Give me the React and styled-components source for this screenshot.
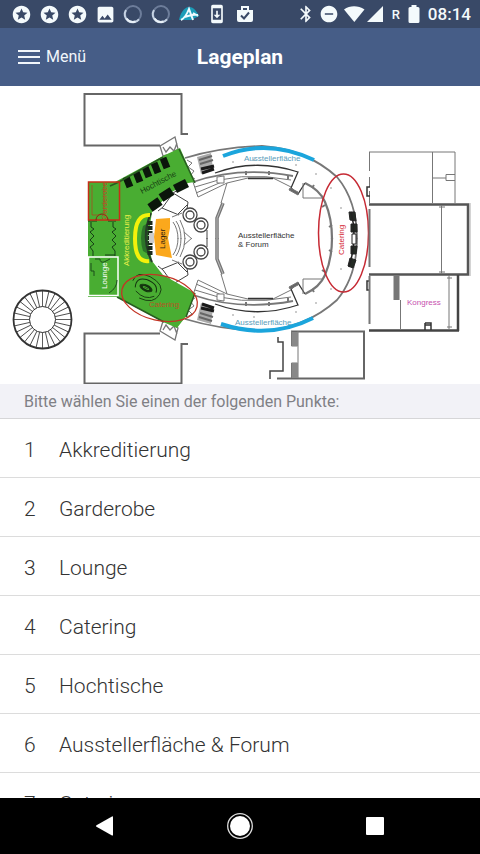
import React, { useState } from "react";
import styled, { createGlobalStyle } from "styled-components";
import {
  MdBluetooth,
  MdDoNotDisturbOn,
  MdImage,
  MdStars,
  MdSystemUpdate,
} from "react-icons/md";

const GlobalStyle = createGlobalStyle`
  * {
    box-sizing: border-box;
  }
  body {
    margin: 0;
    background: #fff;
    font-family: Roboto, "Liberation Sans", sans-serif;
  }
`;

const Screen = styled("div")`
  display: flex;
  flex-direction: column;
  height: 100vh;
  overflow: hidden;
`;

const StatusBar = styled("div")`
  display: flex;
  justify-content: space-between;
  align-items: center;
  flex-shrink: 0;
  height: 28px;
  padding: 0 9px 0 12px;
  background: #394967;
  color: #f4fafc;
`;

const StatusGroup = styled("div")`
  display: flex;
  align-items: center;
  gap: ${(props) => props.$gap}px;
`;

const StatusIcon = styled("span")`
  display: flex;
  justify-content: center;
  width: ${(props) => props.$width || 18}px;

  svg {
    flex-shrink: 0;
  }
`;

const Roaming = styled("span")`
  width: 8px;
  font-size: 13px;
  font-weight: 500;
`;

const Clock = styled("time")`
  font-size: 17px;
  line-height: 20px;
  font-weight: 500;
`;

const Header = styled("header")`
  display: grid;
  grid-template-columns: 1fr auto 1fr;
  align-items: center;
  flex-shrink: 0;
  height: 58px;
  padding: 0 18px;
  background: #465d87;
  color: #fff;
`;

const MenuButton = styled("button")`
  display: flex;
  align-items: center;
  justify-self: start;
  gap: 6px;
  padding: 0;
  border: none;
  background: none;
  color: #f1f6fb;
  font-family: inherit;
  font-size: 16px;
  line-height: 24px;
  cursor: pointer;
`;

const Title = styled("h1")`
  margin: 0;
  font-size: 21px;
  line-height: 24px;
  font-weight: 700;
`;

const Content = styled("main")`
  flex: 1;
  min-height: 0;
  overflow-y: auto;
  scrollbar-width: none;
`;

const Plan = styled("svg")`
  display: block;
  width: 100%;
  height: auto;
  background: #fff;
  font-family: "Liberation Sans", Arial, sans-serif;
  font-size: 8px;
`;

const Hint = styled("p")`
  margin: 0;
  padding: 6px 24px 4px;
  border-bottom: 1px solid #d6d6d8;
  background: #f2f2f7;
  color: #808085;
  font-size: 16px;
  line-height: 24px;
`;

const List = styled("ul")`
  margin: 0;
  padding: 0;
  list-style: none;
`;

const Row = styled("li")`
  border-bottom: 1px solid #dcdcdc;
`;

const RowLink = styled("a")`
  display: flex;
  align-items: center;
  height: 58px;
  padding: 4px 24px 0;
  color: #333;
  font-size: 21px;
  line-height: 28px;
  font-weight: 300;
  text-decoration: none;
`;

const Number = styled("span")`
  width: 35px;
`;

const NavBar = styled("nav")`
  display: flex;
  justify-content: space-between;
  align-items: center;
  flex-shrink: 0;
  height: 56px;
  padding: 0 95px;
  background: #000;
`;

const NavButton = styled("button")`
  display: flex;
  padding: 0;
  border: none;
  background: none;
  cursor: pointer;
`;

const places = [
  "Akkreditierung",
  "Garderobe",
  "Lounge",
  "Catering",
  "Hochtische",
  "Ausstellerfläche & Forum",
  "Catering",
];

const Spinner = () => (
  <svg width="20" height="20" viewBox="0 0 20 20" fill="none" strokeWidth="2">
    <circle cx="10" cy="10" r="8" stroke="#6d7d9a" />
    <path d="M3 6a8 8 0 0 0 13 9.300" stroke="#c6d3e3" />
    <path d="M3.500 14.500a8 8 0 0 0 9 3" stroke="#e9f1f8" />
  </svg>
);

const AppLogo = () => (
  <svg width="22" height="18" viewBox="0 0 22 18" fill="none">
    <path d="M1 15C2 9 6 2 11 2c5 0 8 5 10 9l-8 4z" fill="#1b9cb8" />
    <path
      d="M3 15c4-2 6-6 8-11l4 11M6 12c5-1 8-3 14-2M15 8l5 3"
      stroke="#effbff"
      strokeWidth="2"
    />
  </svg>
);

const BagIcon = () => (
  <svg width="18" height="18" viewBox="0 0 18 18" fill="none">
    <path d="M6 5V2h6v3" stroke="#f4fafc" strokeWidth="2" />
    <path d="M1 5h16v10a2 2 0 0 1-2 2H3a2 2 0 0 1-2-2z" fill="#f4fafc" />
    <path d="M5 10.500l3 3 5-6" stroke="#394967" strokeWidth="2" />
  </svg>
);

const NetworkIcons = () => (
  <svg width="42" height="18" viewBox="0 0 42 18" fill="currentColor">
    <path d="M0 4.500C6 .3 14 .3 20.500 4.500L10.300 17z" />
    <path d="M39 1v16H23z" />
  </svg>
);

const BatteryIcon = () => (
  <svg width="12" height="18" viewBox="0 0 12 18" fill="currentColor">
    <path d="M3.500 0h5v2H10q1.500 0 1.500 1.500v13Q11.500 18 10 18H2Q.5 18 .5 16.500v-13Q.5 2 2 2h1.500z" />
  </svg>
);

// upper half of the round hall, drawn again upside down for the lower half
const HallHalf = () => (
  <g fill="none" stroke="#777" strokeWidth="1">
    <path d="M185 158Q222 147 262 146Q306 149 337 177Q357 201 357 239" strokeWidth="1.800" />
    <path d="M215 173Q256 158 298 172L291 188L298 194L305 183" stroke="#333" strokeWidth="1.300" />
    <path d="M303 183V198H322" />
    <path d="M290 188l8 4v3l-9-5z" fill="#666" />
    <path d="M193 182Q240 166 293 176" strokeWidth="1.800" />
    <path d="M195 187Q240 170 291 180" />
    <path d="M193 182l5 15L227 183L248 178H273L291 187M196 193L224 181" />
    <path d="M248 178.500H273" stroke="#333" strokeWidth="1.500" />
    <path d="M217 177v6h7v-7z" fill="#fff" />
    <path d="M246 171v4M269 171v4M288 175v4" strokeWidth="2" />
    <path d="M227 183L221 203" />
    <path d="M223 203L217 218V239" strokeWidth="3.500" />
    <path d="M223 203L217 218V239" stroke="#bbb" strokeWidth="1" />
    <path d="M305 183Q320 190 325 202Q332 218 332 239" strokeWidth="2.200" />
    <path d="M312 188l2-3M325 205l-3 2M332 225l-3 2" strokeWidth="2" />
    <path d="M197 157l14-4 2 16-12 5z" fill="#aaa" stroke="none" />
    <path d="M199 160l13-4M200 164l13-4" stroke="#666" strokeWidth="2" />
    <path d="M201 169l13-3M202 173l12-4" stroke="#1a1a1a" strokeWidth="3" />
    <g stroke="#444" strokeWidth="1.300">
      <circle cx="190" cy="215" r="7" />
      <circle cx="190" cy="215" r="4" />
      <circle cx="201" cy="225" r="7" />
      <circle cx="201" cy="225" r="4" />
    </g>
    <path d="M207 230v9M162 208l17 7M173 193l15 9-1 7M178 214l9-9M158 211l5-4 10-14 5-3" stroke="#444" />
    <path d="M172 217l10-4M173 222q5 7 5 17M176 221q5 7 5 18M180 220q5 9 5 19M184 232l8 7" />
    <path d="M187 160l5 3-4 4 6 4-4 5 5 3" />
    <path d="M160 146l15-9 3 12-7 5-8 2zM163 147l3 5 4-5 4 4 3-8" strokeWidth="1.300" />
    <g fill="#888" stroke="none">
      <circle cx="233" cy="162" r=".8" />
      <circle cx="254" cy="160" r=".8" />
      <circle cx="296" cy="165" r=".8" />
      <circle cx="316" cy="174" r=".8" />
      <circle cx="331" cy="188" r=".8" />
      <circle cx="341" cy="208" r=".8" />
    </g>
  </g>
);

const Wheel = () => (
  <g fill="none" stroke="#333">
    <circle cx="42.500" cy="319.500" r="29" strokeWidth="1.800" />
    <circle cx="42.500" cy="319.500" r="13" strokeWidth="1" />
    {Array.from({ length: 28 }, (_, i) => (
      <path
        key={i}
        d="M42.500 306.500V291"
        strokeWidth=".8"
        transform={`rotate(${(i * 360) / 28} 42.500 319.500)`}
      />
    ))}
  </g>
);

const FloorPlan = () => (
  <Plan viewBox="0 86 480 298" role="img" aria-label="Lageplan">
    {/* side halls on the left */}
    <g fill="none" stroke="#666" strokeWidth="2">
      <path d="M160 145.500H84.500V94H181.500V134H188" />
      <path d="M160 333.500H84.500V383.500H181.500V344H188" />
    </g>

    <HallHalf />
    <g transform="translate(0 477) scale(1 -1)">
      <HallHalf />
    </g>

    <path
      d="M88 182H115L163 156L180 148L195 182L188 183L170 193L152 212L148 239L152 261L163 275L195 293L187 315L177 328L163 322L117 297H88z"
      fill="#49ad32"
    />
    <g stroke="#0b160b" strokeWidth="7">
      <path d="M126 177l4 10M136 172l4 10M145 167l4 10M154 163l4 10M163 158l4 10" />
    </g>
    <path d="M175 189l12-6M161 198l11-7M150 208l10-7" stroke="#0b160b" strokeWidth="9" />
    <path d="M110 186l9-4 44-25M179 149l16 34M117 297l47 25M195 293l-9 24" fill="none" stroke="#285b20" strokeWidth="1.500" />
    <path
      d="M91 222v5l3 2-4 3 4 4-4 4 4 4-4 3 3 4v5M113 222v5l3 2-4 3 4 4-4 4 4 4-4 3 3 4v5M88 221h9M108 221h8M105 255h10"
      fill="none"
      stroke="#173f17"
    />

    <path d="M143 226q-4 12 0 25l5 3v-31z" fill="#2c7429" />
    <path d="M151 213q-11 25 1 49" fill="none" stroke="#263d27" strokeWidth="2" />
    <path d="M150 221v35" stroke="#1c2b1d" strokeWidth="5" strokeDasharray="4 1" />
    <path d="M149 233h5v10h-5z" fill="#ccc" />
    <path d="M156 219l14-1v10l-2 10 4 20-16-3-2-18z" fill="#fba81c" />
    <path d="M150 215Q135 214 135 238.500Q135 263 149 261" fill="none" stroke="#f4f10b" strokeWidth="4" />

    {/* blue exhibition arcs */}
    <g fill="none" stroke="#1ba5dc" strokeWidth="4">
      <path d="M223 156Q268 138 314 160" />
      <path d="M221 324Q270 340 313 318" />
    </g>

    {/* furniture of the wardrobe and the lounge */}
    <rect x="88.500" y="182" width="31" height="38" fill="none" stroke="#c72e17" strokeWidth="1.500" />
    <path d="M96 220a6 6 0 0 1 12 0" fill="none" stroke="#8d1e12" />
    <path d="M92 185v30h8M104 216v-33" fill="none" stroke="#c72e17" strokeWidth=".6" />
    <rect x="88.500" y="257" width="29.500" height="38.500" fill="none" stroke="#fff" strokeWidth="1.500" />
    <path d="M91 263v8h3v5M95 259h5q0 4 4 3l6-3M117 280q0 8-8 13" fill="none" stroke="#1d4f1b" />
    <g fill="none" stroke="#14340f" transform="rotate(25 146 288)">
      <ellipse cx="146" cy="288" rx="6.500" ry="3" fill="#14340f" />
      <ellipse cx="146" cy="288" rx="3" ry=".7" stroke="#49ad32" />
      <path d="M136 292q-4-10 7-12 13-1 14 8" />
      <path d="M138 295q12 5 19-3M131 287q-1-11 14-11 17 1 16 12-1 12-17 12" strokeWidth=".8" />
    </g>
    <ellipse cx="159.500" cy="298" rx="38.500" ry="22.500" transform="rotate(13 159.500 298)" fill="none" stroke="#c33424" strokeWidth="1.300" />

    <g fill="#242b24" stroke="#222">
      <path d="M349 212h6l1 9-6-1zM351 224h6v8h-6zM351 246h6l-1 8h-5zM350 258l6 2-3 8-5-2z" />
      <path d="M351 212q7 26-2 55" fill="none" strokeWidth="1.500" />
      <path d="M352 234h4v10h-4z" fill="#fff" />
    </g>
    <ellipse cx="343.500" cy="233" rx="25" ry="59" fill="none" stroke="#c62a34" strokeWidth="1.500" />

    {/* halls on the right */}
    <g fill="none" stroke="#777" strokeWidth="1">
      <path d="M369 152H455V203M432.500 152V203M432.500 178H446M455 174.500H446V180.500H455" />
      <path d="M369.500 152V203" strokeDasharray="19 6 10 4" />
      <path d="M370 187h-3v9h3M370 281h-3v9h3" stroke="#333" strokeWidth="1.500" />
      <path d="M369 204.500H468V274.500H369" stroke="#555" strokeWidth="2.500" />
      <path d="M470 203v73" stroke="#aaa" />
      <path d="M369.500 209V324" strokeWidth="2" strokeDasharray="58 9" />
      <path d="M441.500 205v69M439 207h6M439 272h6M449 275v54M447 278h5M447 327h5" />
      <path d="M369 330.500H459M458 275v56" stroke="#444" strokeWidth="2.500" />
      <path d="M396.500 275v25" strokeWidth="6" />
      <path d="M400.500 300v30" />
      <path d="M425 323h6v7M425 323v7M425 325h6" stroke="#333" strokeWidth="1.500" />
      <path d="M277 378.500H364V331.500H291" stroke="#666" strokeWidth="2" />
      <path d="M298 331v47M291.500 331v15h6M291.500 378v-15h6" />
      <path d="M295 332v14M295 363v15" stroke="#888" strokeWidth="6" />
      <path d="M278 337v5h5v29h-13v8" stroke="#444" strokeWidth="1.500" />
    </g>

    <Wheel />

    <text x="238" y="238" fill="#333">Ausstellerfläche</text>
    <text x="238" y="247" fill="#333">&amp; Forum</text>
    <text x="244" y="161" fill="#599dbb">Ausstellerfläche</text>
    <text x="235" y="325" fill="#599dbb">Ausstellerfläche</text>
    <text x="407" y="305" fill="#c64fae">Kongress</text>
    <text x="149" y="307" fill="#b85423">Catering</text>
    <text transform="translate(142 194) rotate(-28)" fill="#173e13">Hochtische</text>
    <text transform="translate(129 266) rotate(-90)" fill="#eef04a">Akkreditierung</text>
    <text transform="translate(107 220) rotate(-90)" fill="#bd4b25">Garderobe</text>
    <text transform="translate(107 289) rotate(-90)" fill="#fff">Lounge</text>
    <text transform="translate(165 249) rotate(-90)" fill="#2b2110">Lager</text>
    <text transform="translate(344 255) rotate(-90)" fill="#d4232f">Catering</text>
  </Plan>
);

const App = () => {
  const [menuOpen, setMenuOpen] = useState(false);

  return (
    <Screen>
      <GlobalStyle />
      <StatusBar>
        <StatusGroup $gap={10}>
          <StatusIcon><MdStars size={21} /></StatusIcon>
          <StatusIcon><MdStars size={21} /></StatusIcon>
          <StatusIcon><MdStars size={21} /></StatusIcon>
          <StatusIcon><MdImage size={21} /></StatusIcon>
          <StatusIcon><Spinner /></StatusIcon>
          <StatusIcon><Spinner /></StatusIcon>
          <StatusIcon><AppLogo /></StatusIcon>
          <StatusIcon><MdSystemUpdate size={20} /></StatusIcon>
          <StatusIcon><BagIcon /></StatusIcon>
        </StatusGroup>
        <StatusGroup $gap={6}>
          <StatusIcon $width={16}><MdBluetooth size={20} /></StatusIcon>
          <StatusIcon><MdDoNotDisturbOn size={20} /></StatusIcon>
          <NetworkIcons />
          <Roaming>R</Roaming>
          <StatusIcon $width={16}><BatteryIcon /></StatusIcon>
          <Clock>08:14</Clock>
        </StatusGroup>
      </StatusBar>
      <Header>
        <MenuButton
          type="button"
          aria-expanded={menuOpen}
          onClick={() => setMenuOpen(!menuOpen)}
        >
          <svg width="22" height="16" viewBox="0 0 22 16" stroke="currentColor" strokeWidth="2">
            <path d="M0 2h22M0 8h22M0 14h22" />
          </svg>
          Menü
        </MenuButton>
        <Title>Lageplan</Title>
      </Header>
      <Content>
        <FloorPlan />
        <Hint>Bitte wählen Sie einen der folgenden Punkte:</Hint>
        <List>
          {places.map((place, index) => (
            <Row key={index}>
              <RowLink href="#">
                <Number>{index + 1}</Number>
                {place}
              </RowLink>
            </Row>
          ))}
        </List>
      </Content>
      <NavBar>
        <NavButton type="button" aria-label="Zurück">
          <svg width="20" height="20" viewBox="0 0 20 20" fill="#fff">
            <path d="M1.500 9.200L17 .5q1-.5 1 .8v17.400q0 1.200-1 .7L1.500 10.800q-1.200-.8 0-1.600z" />
          </svg>
        </NavButton>
        <NavButton type="button" aria-label="Startseite">
          <svg width="28" height="28" viewBox="0 0 28 28">
            <circle cx="14" cy="14" r="12.300" fill="none" stroke="#ddd" strokeWidth="1.300" />
            <circle cx="14" cy="14" r="10" fill="#fff" />
          </svg>
        </NavButton>
        <NavButton type="button" aria-label="Übersicht">
          <svg width="20" height="20" viewBox="0 0 20 20">
            <rect x="1" y="1" width="18" height="18" rx="1" fill="#fff" />
          </svg>
        </NavButton>
      </NavBar>
    </Screen>
  );
};

export default App;
